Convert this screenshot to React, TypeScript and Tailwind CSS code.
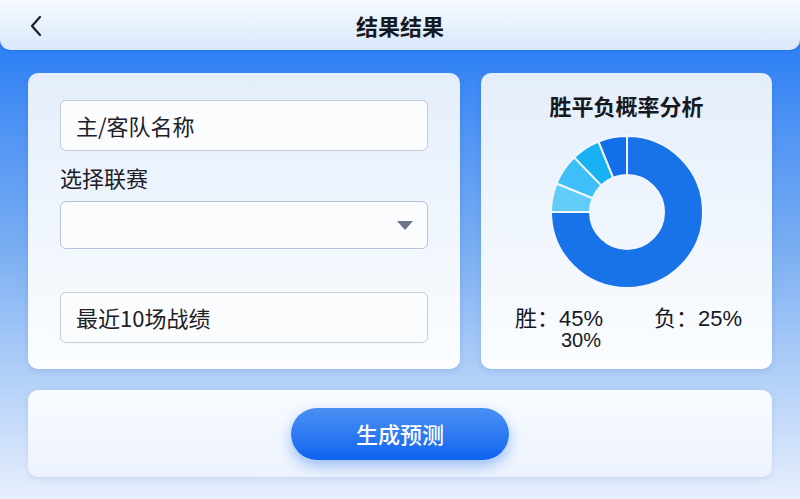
import React from "react";

const FONT = { fontFamily: '"Noto Sans CJK SC", "Noto Sans", sans-serif' };
const NUM_FONT = { fontFamily: '"Liberation Sans", "Noto Sans CJK SC", sans-serif' };

// donut slices, clockwise from 12 o'clock, in degrees
const slices = [
  { from: 0, to: 270, color: "#1872e8" },
  { from: 270, to: 292, color: "#62ccf9" },
  { from: 292, to: 316, color: "#3fbff7" },
  { from: 316, to: 338, color: "#16b2f4" },
  { from: 338, to: 360, color: "#116fe7" },
];

function arcPath(cx: number, cy: number, r: number, r0: number, a0: number, a1: number) {
  const p = (rad: number, a: number) => {
    const t = ((a - 90) * Math.PI) / 180;
    return [cx + rad * Math.cos(t), cy + rad * Math.sin(t)];
  };
  const large = a1 - a0 > 180 ? 1 : 0;
  const [x0, y0] = p(r, a0);
  const [x1, y1] = p(r, a1);
  const [x2, y2] = p(r0, a1);
  const [x3, y3] = p(r0, a0);
  return `M${x0} ${y0} A${r} ${r} 0 ${large} 1 ${x1} ${y1} L${x2} ${y2} A${r0} ${r0} 0 ${large} 0 ${x3} ${y3} Z`;
}

function Donut() {
  return (
    <svg width="154" height="154" viewBox="0 0 154 154">
      {slices.map((s, i) => (
        <path key={i} d={arcPath(77, 77, 76, 37, s.from, s.to)} fill={s.color} stroke="#f2f7fe" strokeWidth="2" />
      ))}
    </svg>
  );
}

export default function App() {
  return (
    <div
      className="w-full h-[499px] flex flex-col overflow-hidden bg-gradient-to-b from-[#1274f4] via-[#7aaef2] to-[#e8effc]"
      style={FONT}
    >
      {/* Header */}
      <div className="h-[50px] shrink-0 rounded-b-[10px] bg-gradient-to-b from-[#f7faff] to-[#d9e8fb] flex items-center relative shadow-[0_1px_2px_rgba(0,60,160,0.2)]">
        <svg className="absolute left-[28px] top-[15px]" width="16" height="22" viewBox="0 0 16 22">
          <path d="M12 2 L4 11 L12 20" fill="none" stroke="#1b1f2a" strokeWidth="2.2" strokeLinecap="round" strokeLinejoin="round" />
        </svg>
        <div className="flex-1 text-center text-[22px] font-semibold text-[#16191f] leading-none">结果结果</div>
      </div>

      <div className="flex flex-col gap-[21px] px-[28px] pt-[23px]">
        <div className="flex gap-[21px] h-[296px]">
          {/* Form card */}
          <div className="w-[432px] rounded-[10px] bg-gradient-to-b from-[#e4eefb] to-[#fbfdff] px-[32px] pt-[27px] flex flex-col shadow-[0_2px_6px_rgba(0,60,160,0.12)]">
            <div className="h-[51px] rounded-[6px] border border-[#c6cbd6] bg-[#fbfcfe] flex items-center px-[15px] text-[22px] text-[#1d2028]">
              主/客队名称
            </div>
            <div className="mt-[12px] h-[28px] flex items-center text-[22px] text-[#1d2028] leading-none">选择联赛</div>
            <div className="mt-[10px] h-[48px] rounded-[6px] border border-[#b7c1db] bg-[#fbfcfe] flex items-center justify-end pr-[14px]">
              <svg width="16" height="9" viewBox="0 0 16 9">
                <path d="M0 0 H16 L8 9 Z" fill="#6b7489" />
              </svg>
            </div>
            <div className="mt-[43px] h-[51px] rounded-[6px] border border-[#c6cbd6] bg-[#fbfcfe] flex items-center px-[15px] text-[22px] text-[#1d2028]">
              最近10场战绩
            </div>
          </div>

          {/* Chart card */}
          <div className="flex-1 rounded-[10px] bg-gradient-to-b from-[#e4eefb] to-[#fbfdff] flex flex-col items-center pt-[18px] shadow-[0_2px_6px_rgba(0,60,160,0.12)]">
            <div className="text-[22px] font-bold text-[#16191f] leading-[28px]">胜平负概率分析</div>
            <div className="mt-[16px]">
              <Donut />
            </div>
            <div className="w-full flex justify-between pl-[34px] pr-[30px] mt-[18px] text-[#16191f]" style={NUM_FONT}>
              <div className="flex flex-col">
                <div className="text-[22px] leading-[23px]">胜：45%</div>
                <div className="text-[20px] leading-[21px] pl-[46px]">30%</div>
              </div>
              <div className="text-[22px] leading-[23px]">负：25%</div>
            </div>
          </div>
        </div>

        {/* Action card */}
        <div className="h-[87px] rounded-[10px] bg-gradient-to-b from-[#f8fbff] to-[#edf3fd] flex items-center justify-center shadow-[0_2px_6px_rgba(0,60,160,0.1)]">
          <button className="w-[218px] h-[52px] rounded-full bg-gradient-to-b from-[#4a90f2] to-[#0a63f0] text-white text-[22px] font-medium shadow-[0_6px_14px_rgba(30,110,240,0.4)]">
            生成预测
          </button>
        </div>
      </div>
    </div>
  );
}
